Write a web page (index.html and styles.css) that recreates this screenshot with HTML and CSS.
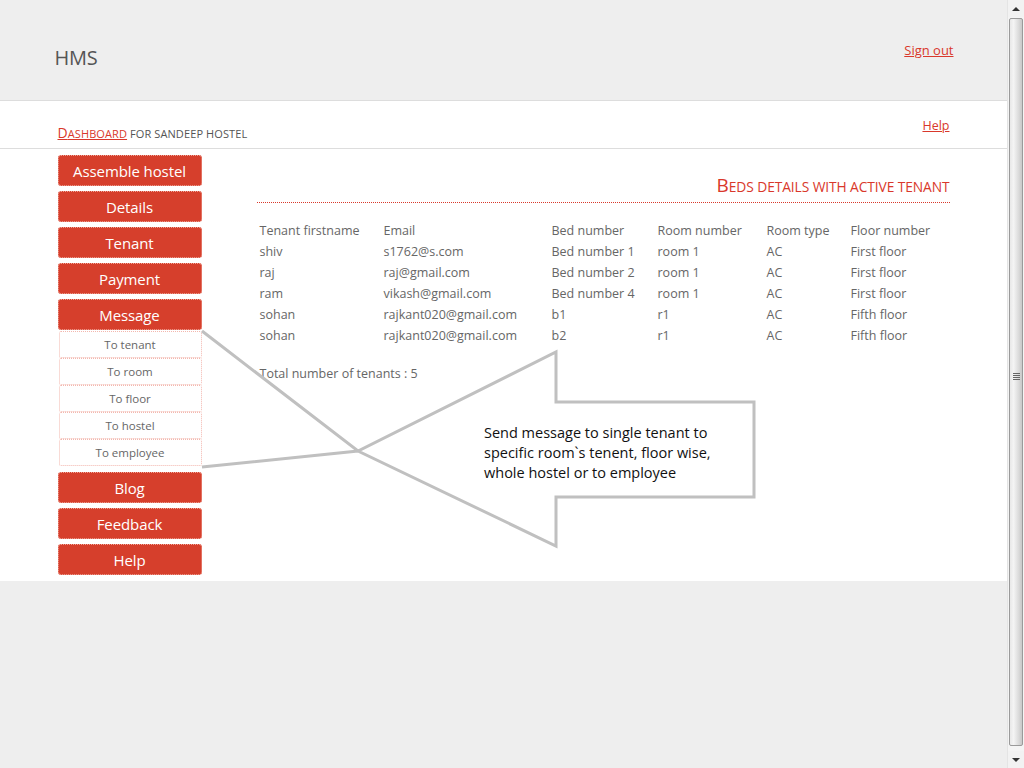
FILE: index.html
```html
<!DOCTYPE html>
<html>
<head>
<meta charset="utf-8">
<title>HMS</title>
<link rel="stylesheet" href="styles.css">
</head>
<body>
<div class="page">
  <header class="top">
    <div class="wrap top-inner">
      <div class="brand">HMS</div>
      <a class="signout" href="#">Sign out</a>
    </div>
  </header>
  <div class="subbar">
    <div class="wrap subbar-inner">
      <div class="crumb"><a href="#"><span class="cap">D</span>ashboard</a> for sandeep hostel</div>
      <a class="help" href="#">Help</a>
    </div>
  </div>
  <main class="main">
    <div class="wrap main-inner">
      <nav class="side">
        <a class="btn" href="#">Assemble hostel</a>
        <a class="btn" href="#">Details</a>
        <a class="btn" href="#">Tenant</a>
        <a class="btn" href="#">Payment</a>
        <a class="btn" href="#">Message</a>
        <div class="sub">
          <a href="#">To tenant</a>
          <a href="#">To room</a>
          <a href="#">To floor</a>
          <a href="#">To hostel</a>
          <a href="#">To employee</a>
        </div>
        <a class="btn" href="#">Blog</a>
        <a class="btn" href="#">Feedback</a>
        <a class="btn" href="#">Help</a>
      </nav>
      <section class="content">
        <h2 class="title"><span class="cap">B</span>eds details with active tenant</h2>
        <table class="beds">
          <thead>
            <tr><th class="c1">Tenant firstname</th><th class="c2">Email</th><th class="c3">Bed number</th><th class="c4">Room number</th><th class="c5">Room type</th><th>Floor number</th></tr>
          </thead>
          <tbody>
            <tr><td>shiv</td><td>s1762@s.com</td><td>Bed number 1</td><td>room 1</td><td>AC</td><td>First floor</td></tr>
            <tr><td>raj</td><td>raj@gmail.com</td><td>Bed number 2</td><td>room 1</td><td>AC</td><td>First floor</td></tr>
            <tr><td>ram</td><td>vikash@gmail.com</td><td>Bed number 4</td><td>room 1</td><td>AC</td><td>First floor</td></tr>
            <tr><td>sohan</td><td>rajkant020@gmail.com</td><td>b1</td><td>r1</td><td>AC</td><td>Fifth floor</td></tr>
            <tr><td>sohan</td><td>rajkant020@gmail.com</td><td>b2</td><td>r1</td><td>AC</td><td>Fifth floor</td></tr>
          </tbody>
        </table>
        <p class="total">Total number of tenants : 5</p>
      </section>
    </div>
  </main>
  <div class="rest"></div>

  <svg class="callout" width="1007" height="768" viewBox="0 0 1007 768">
    <polyline points="202,331 358,451 556,546 556,497 754,497 754,402 556,402 556,352 358,451 202,467" fill="none" stroke="#c0c0c0" stroke-width="3" stroke-linejoin="miter"/>
  </svg>
  <div class="callout-text">Send message to single tenant to<br>specific room`s tenent, floor wise,<br>whole hostel or to employee</div>
</div>
<div class="scrollbar">
  <div class="sb-btn"><span class="tri up"></span></div>
  <div class="sb-track">
    <div class="sb-thumb"><span class="grip"></span></div>
  </div>
  <div class="sb-btn"><span class="tri down"></span></div>
</div>
</body>
</html>
```

FILE: styles.css
```css
* { box-sizing: border-box; }
html, body { margin: 0; padding: 0; }
body {
  width: 1024px;
  height: 768px;
  overflow: hidden;
  display: flex;
  font-family: "Open Sans", "Noto Sans", sans-serif;
  color: #666;
  background: #eeeeee;
}
a { color: #d9382b; }

.page {
  position: relative;
  width: 1007px;
  height: 768px;
  display: flex;
  flex-direction: column;
  background: #eeeeee;
}
.wrap {
  width: 900px;
  margin: 0 auto;
}

.top {
  height: 101px;
  border-bottom: 1px solid #dddddd;
  background: #eeeeee;
}
.top-inner {
  display: flex;
  justify-content: space-between;
  padding: 0 0 0 1px;
}
.brand {
  font-size: 20px;
  color: #555;
  padding-top: 45px;
  line-height: 26px;
  letter-spacing: -0.3px;
}
.signout {
  font-size: 13px;
  padding-top: 41px;
  line-height: 18px;
}

.subbar {
  background: #fff;
  height: 48px;
  border-bottom: 1px solid #dddddd;
}
.subbar-inner {
  display: flex;
  justify-content: space-between;
  align-items: flex-start;
  padding: 0 4px;
}
.crumb {
  text-transform: uppercase;
  font-size: 11px;
  color: #555;
  padding-top: 23px;
  line-height: 18px;
  letter-spacing: 0.1px;
}
.crumb .cap { font-size: 14px; }
.crumb a { color: #d9382b; }
.help {
  font-size: 12.5px;
  padding-top: 16px;
  line-height: 18px;
}

.main {
  background: #fff;
  height: 432px;
}
.main-inner {
  display: flex;
  padding: 6px 4px 0 4px;
}
.side {
  width: 144px;
  display: flex;
  flex-direction: column;
}
.btn {
  display: block;
  height: 31px;
  margin-bottom: 5px;
  background: #d63f2c;
  border: 1px dotted #f0a496;
  border-radius: 3px;
  color: #fff;
  text-decoration: none;
  text-align: center;
  font-size: 15px;
  line-height: 30px;
  letter-spacing: -0.1px;
}
.btn:last-child { margin-bottom: 0; }
.sub {
  display: flex;
  flex-direction: column;
  margin: -4px 0 6px 1px;
}
.sub a {
  display: block;
  height: 27px;
  border: 1px dotted #f3b7ae;
  border-radius: 2px;
  background: #fff;
  color: #666;
  text-decoration: none;
  text-align: center;
  font-size: 11.5px;
  line-height: 26px;
}

.content {
  flex: 1;
  margin-left: 55px;
}
.title {
  margin: 18px 0 0 0;
  font-weight: normal;
  text-transform: uppercase;
  font-size: 13.8px;
  color: #d9382b;
  text-align: right;
  line-height: 24px;
  padding-right: 0;
  border-bottom: 1px dotted #d9382b;
  padding-bottom: 3px;
  letter-spacing: -0.1px;
}
.title .cap { font-size: 19px; }
.beds {
  border-collapse: collapse;
  margin: 17px 0 0 0;
  font-size: 12.5px;
  color: #666;
}
.beds th, .beds td {
  font-weight: normal;
  text-align: left;
  padding: 0 0 0 3px;
  height: 21px;
  line-height: 21px;
  white-space: nowrap;
}
.beds .c1 { width: 124px; }
.beds .c2 { width: 168px; }
.beds .c3 { width: 106px; }
.beds .c4 { width: 109px; }
.beds .c5 { width: 84px; }
.total {
  margin: 19px 0 0 3px;
  font-size: 12.5px;
  line-height: 18px;
  color: #666;
}

.rest {
  flex: 1;
  background: #eeeeee;
}

.callout {
  position: absolute;
  left: 0;
  top: 0;
  pointer-events: none;
}
.callout-text {
  position: absolute;
  left: 484px;
  top: 423px;
  font-size: 14.5px;
  line-height: 20px;
  color: #111;
  letter-spacing: 0;
}

.scrollbar {
  width: 17px;
  height: 768px;
  display: flex;
  flex-direction: column;
  background: #f4f4f4;
  border-left: 1px solid #e4e4e4;
}
.sb-btn {
  height: 17px;
  display: flex;
  align-items: center;
  justify-content: center;
  background: #f2f2f2;
}
.tri {
  width: 0;
  height: 0;
  border-left: 4px solid transparent;
  border-right: 4px solid transparent;
}
.tri.up { border-bottom: 4px solid #333; }
.tri.down { border-top: 4px solid #333; }
.sb-track {
  flex: 1;
  display: flex;
  padding: 1px 1px 5px 1px;
}
.sb-thumb {
  flex: 1;
  border: 1px solid #9a9a9a;
  border-radius: 2px;
  background: linear-gradient(to right, #e8e8e8 0%, #f4f4f4 30%, #dcdcdc 70%, #c8c8c8 100%);
  display: flex;
  align-items: center;
  justify-content: center;
  padding-bottom: 12px;
}
.grip {
  width: 7px;
  height: 7px;
  background: repeating-linear-gradient(to bottom, #666 0 1px, transparent 1px 2px);
}
```
